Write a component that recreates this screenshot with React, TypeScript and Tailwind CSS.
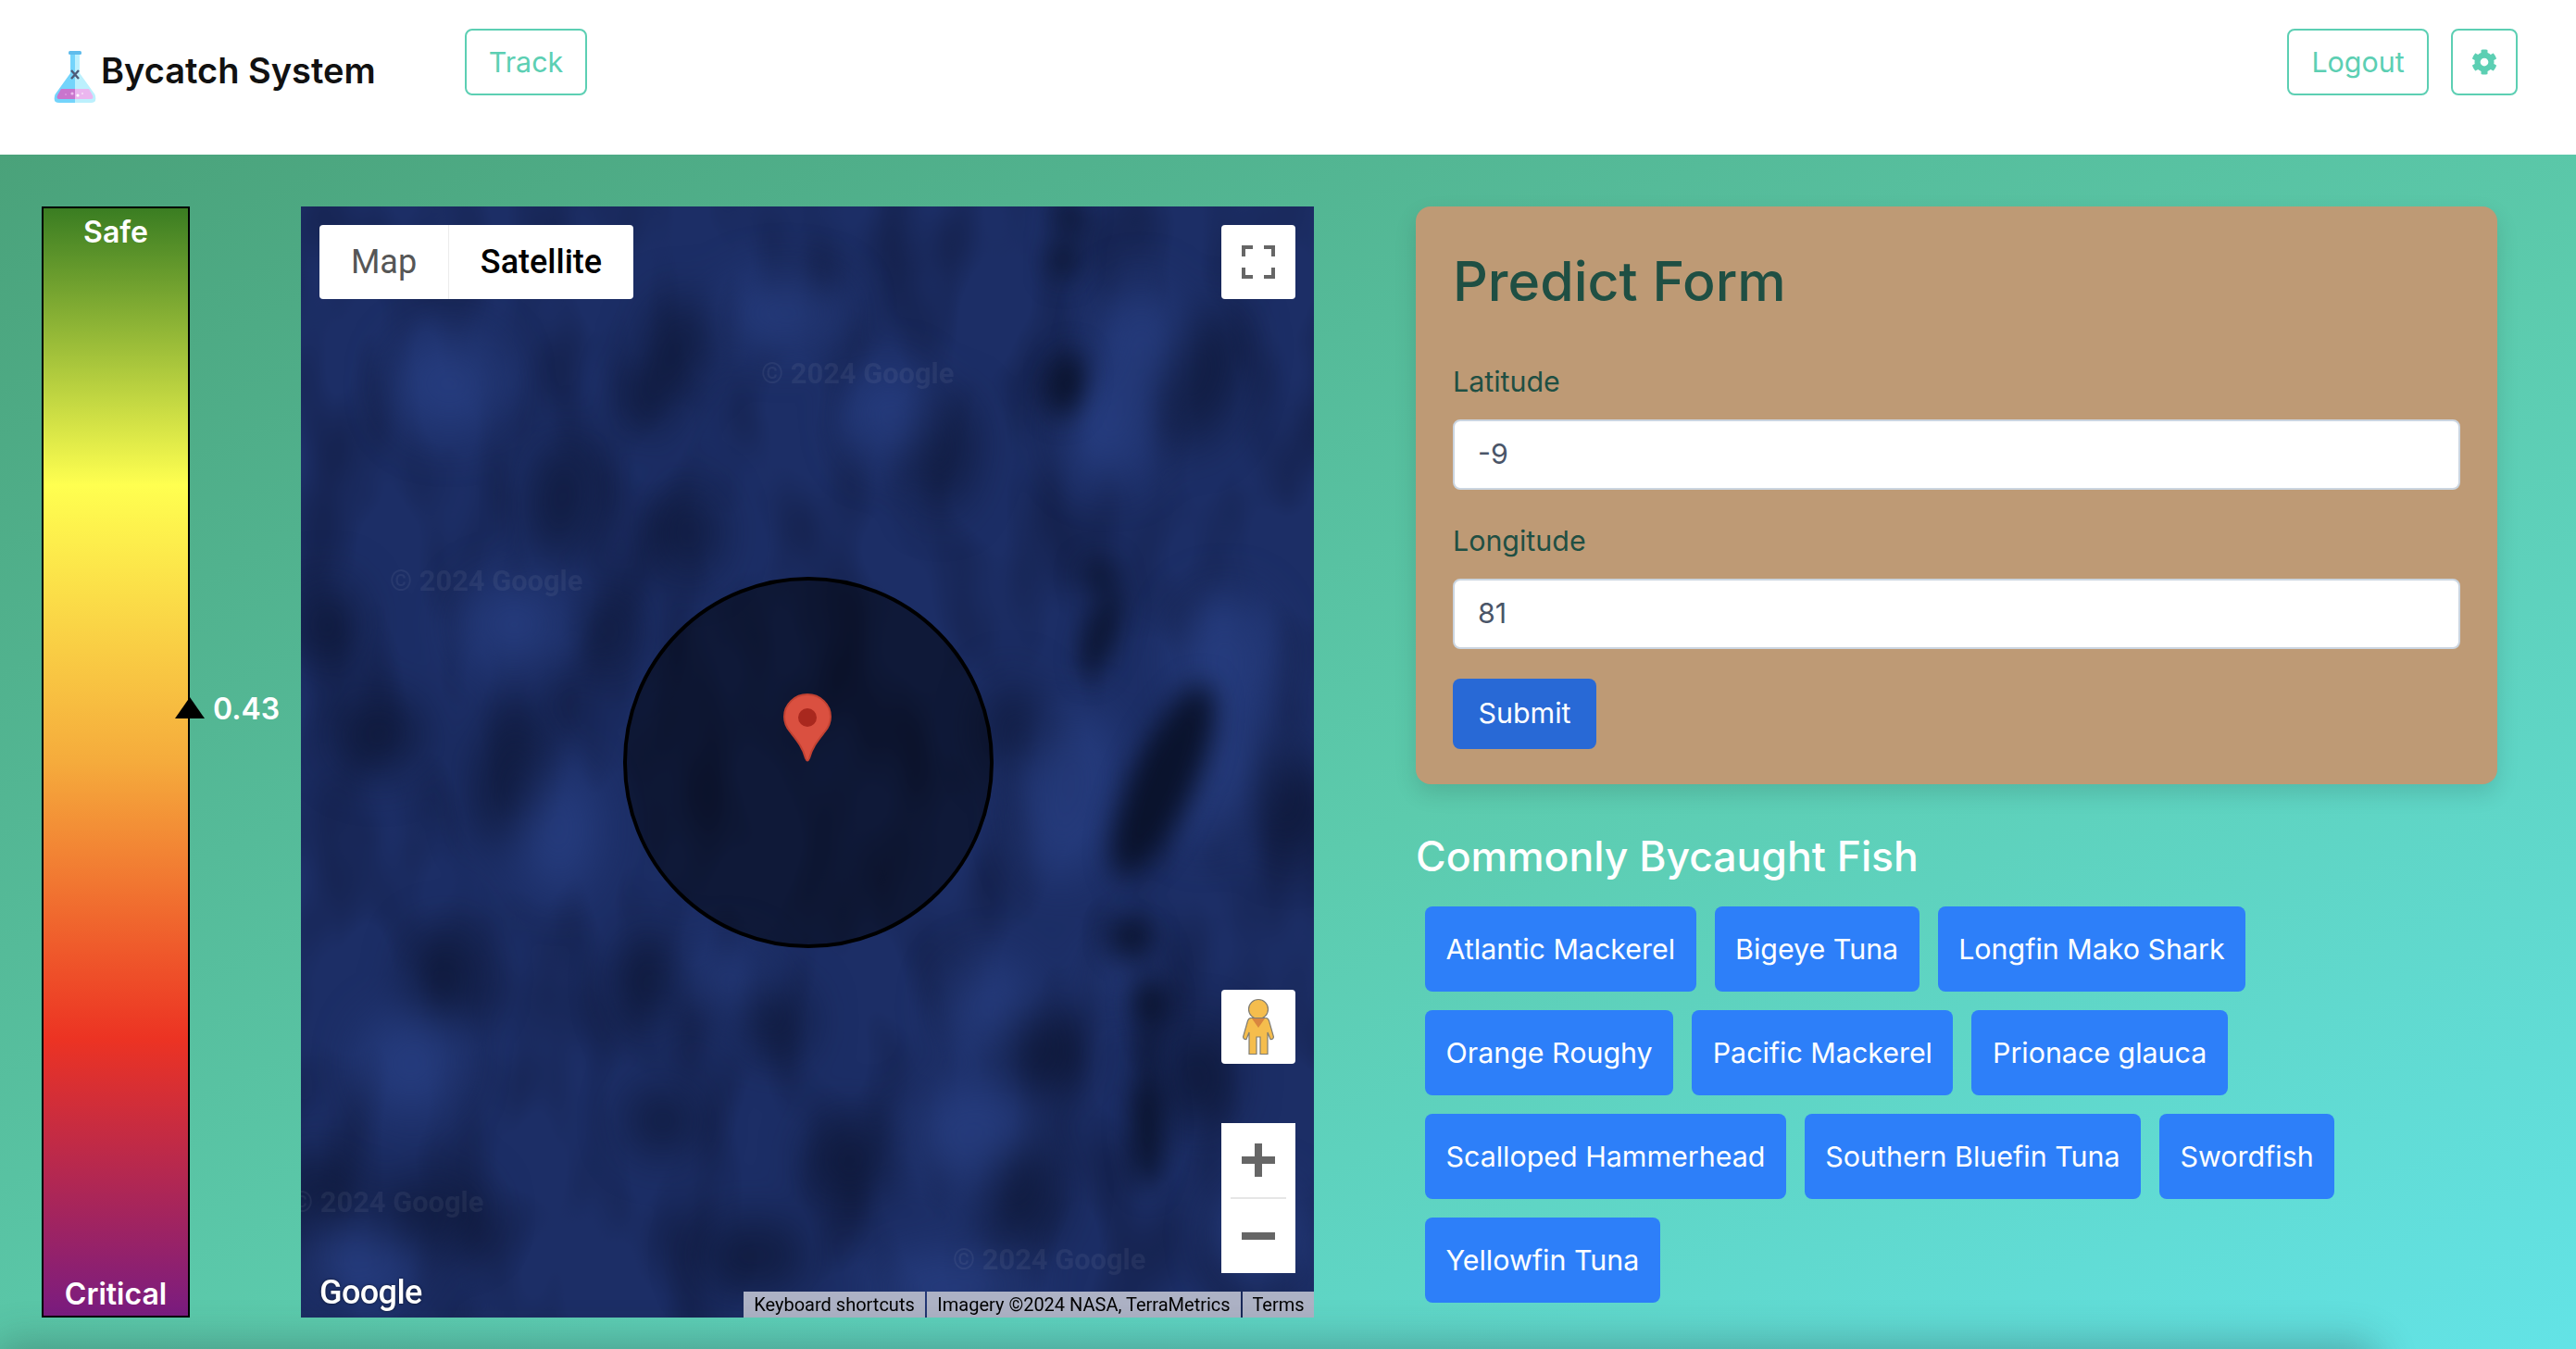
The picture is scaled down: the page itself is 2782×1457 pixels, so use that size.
import { FaCog } from "react-icons/fa";

const fish = [
  "Atlantic Mackerel",
  "Bigeye Tuna",
  "Longfin Mako Shark",
  "Orange Roughy",
  "Pacific Mackerel",
  "Prionace glauca",
  "Scalloped Hammerhead",
  "Southern Bluefin Tuna",
  "Swordfish",
  "Yellowfin Tuna",
];

// x, y, rx, ry, rotation, in a 1568 square stretched over the map
const softDark = [
  [405, 410, 50, 85, 10], [40, 590, 55, 60, 0], [1000, 350, 42, 80, 10], [1100, 735, 45, 65, 0],
  [1150, 1195, 65, 60, 0], [225, 1085, 60, 60, 0], [120, 745, 75, 55, 0], [535, 1095, 45, 70, 0],
  [735, 1150, 55, 50, 0], [1120, 1395, 60, 75, 15], [850, 1345, 70, 60, 0], [25, 1385, 70, 50, 0],
  [585, 190, 50, 60, 0], [540, 270, 40, 50, 0], [1385, 1230, 60, 75, 0], [1530, 840, 45, 80, 0],
  [600, 460, 50, 60, 0], [480, 600, 45, 60, 0], [320, 800, 50, 100, 15], [1400, 240, 50, 100, 20],
  [560, 1290, 60, 45, 0], [200, 1420, 90, 50, 0], [700, 1480, 90, 50, 0],
];
const ridge = [
  [1335, 810, 48, 150, 27], [1285, 1030, 32, 24, 0], [1315, 1125, 26, 32, 0], [1310, 1300, 24, 85, 0],
  [1240, 600, 22, 65, 20], [1235, 520, 28, 16, 0], [1185, 250, 26, 45, 15], [1180, 75, 22, 26, 0],
  [1190, 15, 26, 16, 0], [1310, 1190, 20, 12, 0],
];
const lightBlobs = [
  [660, 1090, 55, 42, 0], [1040, 1310, 95, 75, 0], [1250, 310, 75, 75, 0], [1065, 1130, 70, 65, 0],
  [910, 295, 65, 65, 0], [330, 590, 85, 60, 0], [1300, 190, 60, 80, 0], [1190, 830, 75, 120, 15],
  [1430, 640, 80, 90, 0], [1265, 1090, 45, 40, 0], [170, 1210, 80, 70, 0], [90, 1490, 90, 60, 0],
  [1010, 1525, 130, 50, 0], [1420, 800, 60, 100, 25], [400, 880, 60, 90, 0], [1480, 1450, 70, 70, 0],
  [230, 250, 90, 70, 0], [750, 150, 100, 50, 0],
];

const watermarks = [
  "left-[497px] top-[158px]",
  "left-[96px] top-[382px]",
  "left-[-11px] top-[1053px]",
  "left-[704px] top-[1115px]",
];

function Flask() {
  return (
    <svg width="46" height="56" viewBox="0 0 46 56">
      <path d="M18 2V24L1.5 47Q-1.5 56 6 56H23V2Z" fill="#73d4fb" />
      <path d="M28 2V24L44.5 47Q47.5 56 40 56H23V2Z" fill="#bcf0fd" />
      <path d="M8 41H23V52H6Q2.5 52 4 48Z" fill="#c975cd" />
      <path d="M38 41H23V52H40Q43.5 52 42 48Z" fill="#ebb6ef" />
      <rect x="16" y="0" width="14" height="4" rx="1.5" fill="#5fbcec" />
      <path d="M19 21L27 30M27 21L19 30" stroke="#4d5a78" strokeWidth="2.4" />
      <circle cx="20" cy="46" r="1.6" fill="#efbdf0" />
      <circle cx="26" cy="48" r="1.6" fill="#ffffff" />
      <circle cx="31" cy="46" r="0.8" fill="#ffffff" />
      <circle cx="13" cy="47" r="0.7" fill="#efbdf0" />
    </svg>
  );
}

function Pegman() {
  return (
    <svg width="36" height="62" viewBox="0 0 36 62">
      <circle cx="18" cy="12" r="10.5" fill="#f5bd4d" stroke="#7f7c74" strokeWidth="1.2" />
      <path
        d="M10 21.5H26Q28.5 21.5 29.5 24.5L34.5 42Q34 45 31 44.5L28 37V60.5H20V42H16V60.5H8V37L5 44.5Q2 45 1.5 42L6.5 24.5Q7.5 21.5 10 21.5Z"
        fill="#f5bd4d"
        stroke="#7f7c74"
        strokeWidth="1.2"
      />
      <path d="M11 22H25L18 32Z" fill="#d9853f" />
    </svg>
  );
}

function Pin() {
  return (
    <svg width="52" height="74" viewBox="0 0 52 74">
      <path
        d="M26 1C12 1 1 12 1 25C1 31 3 36 7 41C14 50 21 58 24 70Q26 75 28 70C31 58 38 50 45 41C49 36 51 31 51 25C51 12 40 1 26 1Z"
        fill="#da5040"
        stroke="#c24232"
        strokeWidth="2"
      />
      <circle cx="26" cy="26" r="10" fill="#a9281e" />
    </svg>
  );
}

function MapView() {
  return (
    <div className="relative h-[1200px] w-[1094px] shrink-0 overflow-hidden bg-[#1c2e66] font-['Roboto',sans-serif]">
      <svg className="absolute inset-0 h-full w-full" viewBox="0 0 1568 1568" preserveAspectRatio="none">
        <defs>
          <filter id="blur-wide" x="-10%" y="-10%" width="120%" height="120%" colorInterpolationFilters="sRGB">
            <feGaussianBlur stdDeviation="34" />
          </filter>
          <filter id="blur-tight" x="-10%" y="-10%" width="120%" height="120%" colorInterpolationFilters="sRGB">
            <feGaussianBlur stdDeviation="20" />
          </filter>
          <filter id="mottle" x="0" y="0" width="100%" height="100%" colorInterpolationFilters="sRGB">
            <feTurbulence type="fractalNoise" baseFrequency="0.009 0.005" numOctaves="2" seed="7" />
            <feColorMatrix values="0 0 0 0 0.05  0 0 0 0 0.08  0 0 0 0 0.2  1.2 0 0 0 -0.5" />
          </filter>
        </defs>
        <rect width="1568" height="1568" filter="url(#mottle)" />
        <g filter="url(#blur-wide)">
          {lightBlobs.map(([x, y, rx, ry, r], i) => (
            <ellipse key={i} cx={x} cy={y} rx={rx} ry={ry} transform={`rotate(${r} ${x} ${y})`} fill="#2a4288" opacity="0.7" />
          ))}
          {softDark.map(([x, y, rx, ry, r], i) => (
            <ellipse key={i} cx={x} cy={y} rx={rx} ry={ry} transform={`rotate(${r} ${x} ${y})`} fill="#0b1431" opacity="0.7" />
          ))}
        </g>
        <g filter="url(#blur-tight)">
          {ridge.map(([x, y, rx, ry, r], i) => (
            <ellipse key={i} cx={x} cy={y} rx={rx} ry={ry} transform={`rotate(${r} ${x} ${y})`} fill="#081026" opacity="0.9" />
          ))}
        </g>
      </svg>

      {watermarks.map((pos) => (
        <div key={pos} className={`absolute ${pos} whitespace-nowrap text-[30.8px] font-bold text-white/[0.06]`}>
          © 2024 Google
        </div>
      ))}

      {/* radius circle and marker */}
      <div className="absolute left-[348px] top-[400px] h-[401px] w-[400px] rounded-full border-4 border-black bg-black/45" />
      <div className="absolute left-[521px] top-[526px]">
        <Pin />
      </div>

      <div className="absolute left-5 top-5 flex h-20 w-[339px] overflow-hidden rounded text-[36px] leading-none">
        <div className="flex w-[140px] items-center justify-center border-r border-[#ececec] bg-white text-[#565656]">Map</div>
        <div className="flex flex-1 items-center justify-center bg-white font-medium text-black">Satellite</div>
      </div>

      <div className="absolute right-5 top-5 flex h-20 w-20 items-center justify-center rounded bg-white">
        <svg width="36" height="36" viewBox="0 0 36 36" fill="none" stroke="#666666" strokeWidth="4">
          <path d="M2 12V2H12M24 2H34V12M34 24V34H24M12 34H2V24" />
        </svg>
      </div>

      <div className="absolute right-5 top-[846px] flex h-20 w-20 items-center justify-center rounded bg-white">
        <Pegman />
      </div>

      <div className="absolute right-5 top-[990px] flex h-[162px] w-20 flex-col items-center bg-white">
        <svg className="mt-[22px]" width="36" height="36" viewBox="0 0 36 36" fill="#666666">
          <path d="M14 0H22V14H36V22H22V36H14V22H0V14H14Z" />
        </svg>
        <div className="mt-[22px] h-0.5 w-[60px] bg-[#e6e6e6]" />
        <svg className="mt-[22px]" width="36" height="36" viewBox="0 0 36 36" fill="#666666">
          <path d="M0 14H36V22H0Z" />
        </svg>
      </div>

      <div className="absolute bottom-[9px] left-5 text-[36px] font-medium leading-none tracking-[-0.6px] text-white [text-shadow:0_0_3px_rgba(0,0,0,0.6)]">
        Google
      </div>

      <div className="absolute bottom-0 right-0 flex h-7 gap-0.5 text-[20px] leading-7 text-black">
        <div className="w-[196px] bg-[#adb2c5] text-center">Keyboard shortcuts</div>
        <div className="w-[339px] bg-[#adb2c5] text-center">Imagery ©2024 NASA, TerraMetrics</div>
        <div className="w-[77px] bg-[#adb2c5] text-center">Terms</div>
      </div>
    </div>
  );
}

function RiskBar() {
  return (
    <div className="relative flex h-[1200px] w-40 shrink-0 flex-col items-center justify-between border-2 border-black bg-[linear-gradient(to_bottom,#3a7d22_0%,#ffff50_25%,#f5ab3c_50%,#ec3323_75%,#7a1c80_100%)] pb-[3px] pt-[6px] text-[32px] font-semibold leading-[40px] text-white">
      <span>Safe</span>
      <span>Critical</span>
      <div className="absolute left-[142px] top-[528px] h-0 w-0 border-x-16 border-b-[23px] border-x-transparent border-b-black" />
      <span className="absolute left-[183px] top-[521px]">0.43</span>
    </div>
  );
}

export default function App() {
  return (
    <div className="relative flex h-[1457px] w-[2782px] flex-col overflow-hidden font-['Inter',sans-serif]">
      <header className="flex h-[167px] shrink-0 items-start bg-white pt-[31px]">
        <div className="ml-[58px] mt-6">
          <Flask />
        </div>
        <div className="ml-[5px] mt-[21px] w-[393px] text-[38px] font-semibold leading-[48px] text-[#111111]">Bycatch System</div>
        <button className="flex h-[72px] w-[132px] items-center justify-center rounded-lg border-2 border-[#5ccfb3] pt-0.5 text-[30.4px] text-[#5ccfb3]">
          Track
        </button>
        <button className="ml-auto flex h-[72px] w-[153px] items-center justify-center rounded-lg border-2 border-[#5ccfb3] pt-0.5 text-[30.4px] text-[#5ccfb3]">
          Logout
        </button>
        <button className="ml-6 mr-[63px] flex h-[72px] w-[72px] items-center justify-center rounded-lg border-2 border-[#5ccfb3] text-[#5ccfb3]">
          <FaCog size={28} />
        </button>
      </header>

      <main className="flex flex-1 items-start bg-[linear-gradient(to_bottom_right,#4aa27a,#5ccbad_55%,#63e3e6)] pl-[45px] pt-14">
        <RiskBar />
        <div className="ml-[120px]">
          <MapView />
        </div>
        <div className="ml-[110px] w-[1168px]">
          <section className="h-[624px] rounded-2xl bg-[#be9a75] px-10 pt-[45px] text-[#1f4f43] shadow-[0_10px_25px_rgba(0,0,0,0.12)]">
            <h2 className="text-[59px] font-medium leading-[72px]">Predict Form</h2>
            <label className="mt-[48px] block text-[30.4px] leading-[48px]">Latitude</label>
            <div className="mt-[17px] flex h-[76px] items-center rounded-lg border-2 border-[#cbd5e0] bg-white px-[25px] text-[30.4px] text-[#4a5568]">-9</div>
            <label className="mt-[31px] block text-[30.4px] leading-[48px]">Longitude</label>
            <div className="mt-[17px] flex h-[76px] items-center rounded-lg border-2 border-[#cbd5e0] bg-white px-[25px] text-[30.4px] text-[#4a5568]">81</div>
            <button className="mt-8 flex h-[76px] w-[155px] items-center justify-center rounded-lg bg-[#2869d6] text-[30.4px] text-white">Submit</button>
          </section>
          <h3 className="mt-[49px] text-[44.5px] font-medium leading-[58px] text-white">Commonly Bycaught Fish</h3>
          <div className="ml-[10px] mt-[25px] flex flex-wrap gap-5">
            {fish.map((name) => (
              <div key={name} className="flex h-[92px] items-center rounded-lg bg-[#2d7ff9] px-[22.5px] pt-0.5 text-[30.4px] text-white">
                {name}
              </div>
            ))}
          </div>
        </div>
      </main>

      {/* shadow of something sitting just under the fold */}
      <div className="absolute left-0 right-[220px] top-[1457px] h-10 rounded-full shadow-[0_0_40px_10px_rgba(40,60,60,0.3)]" />
    </div>
  );
}
